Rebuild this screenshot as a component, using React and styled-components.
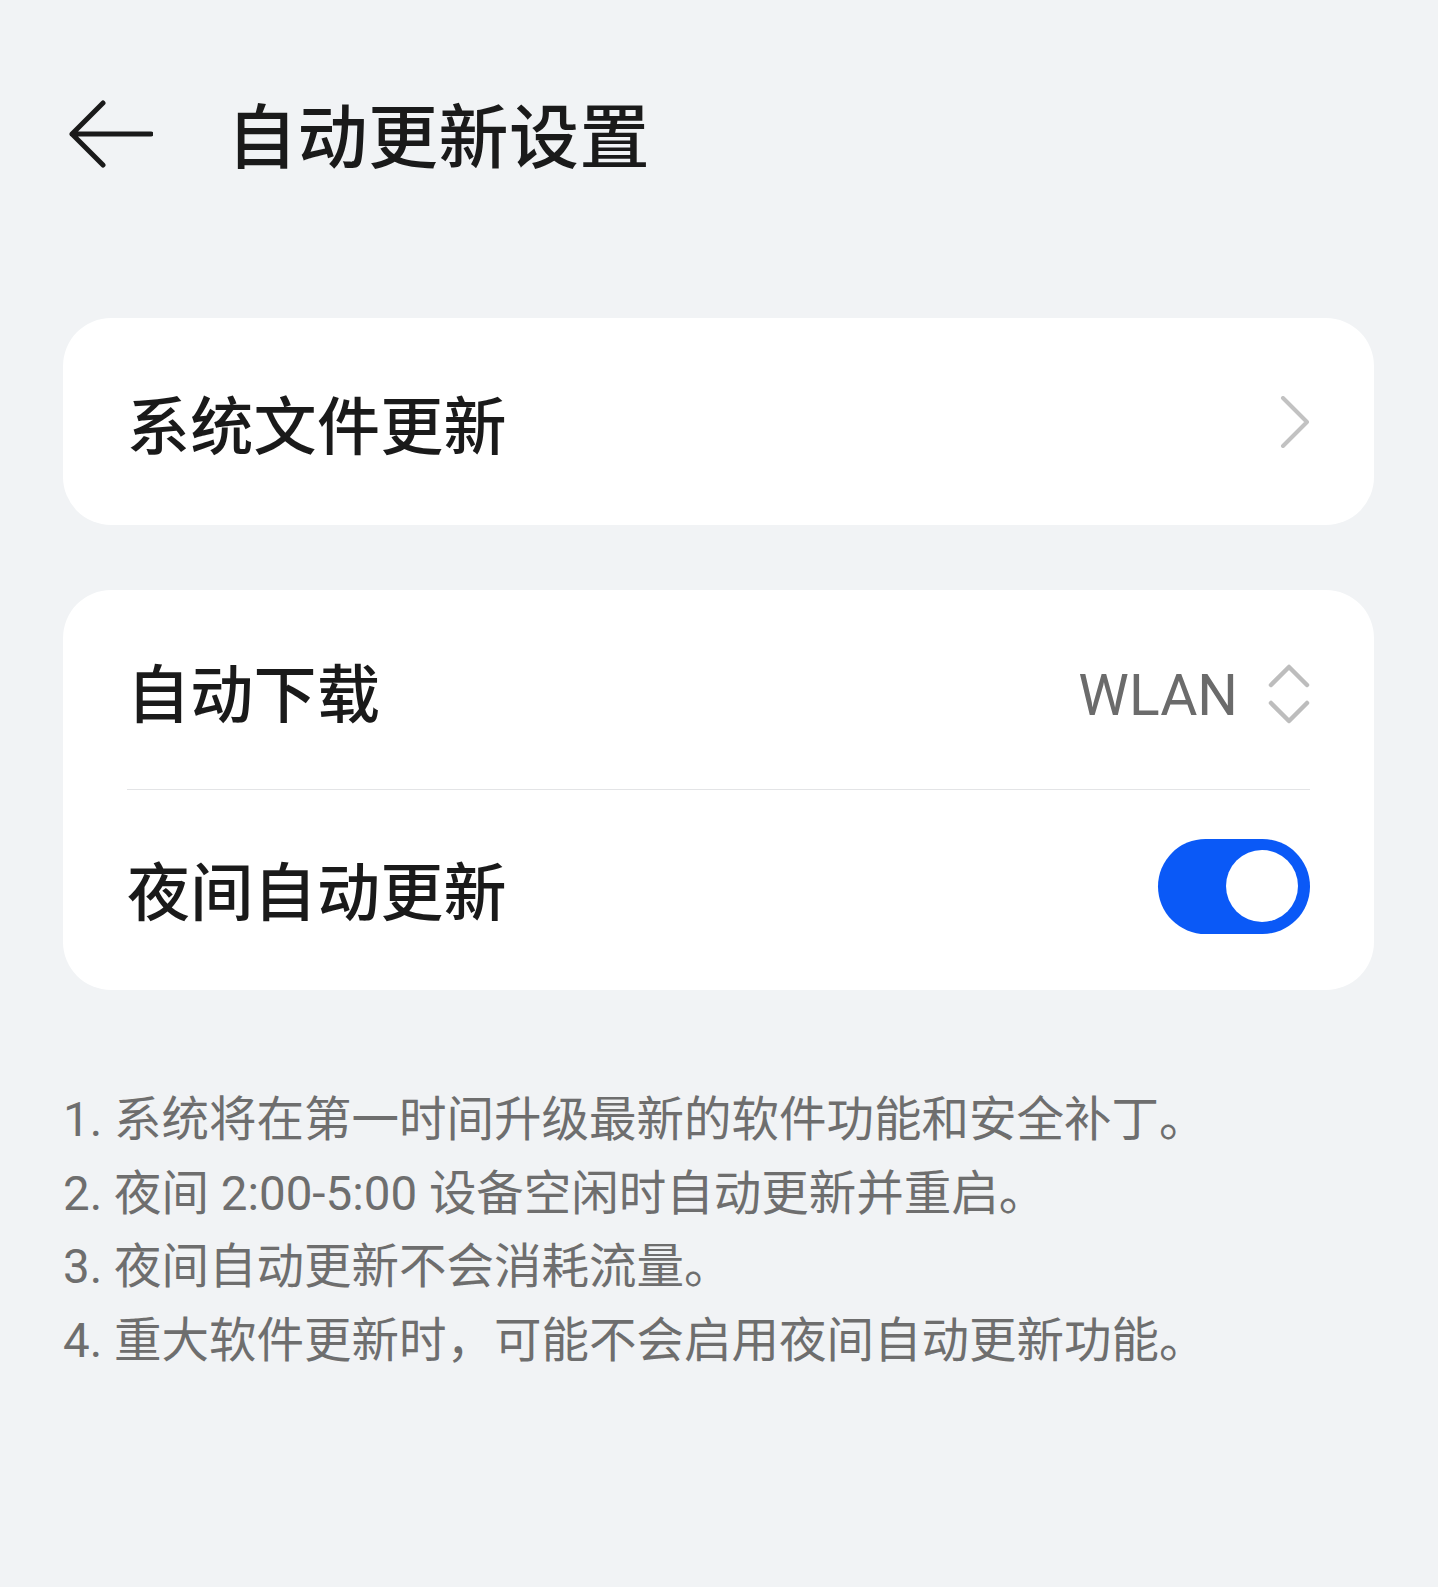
import React from 'react';
import styled, { createGlobalStyle } from 'styled-components';

const GlobalStyle = createGlobalStyle`
  body {
    margin: 0;
    background: #f1f3f5;
    font-family: "Noto Sans CJK SC", "Noto Sans", sans-serif;
  }
`;

const Page = styled.div`
  width: 1438px;
  min-height: 1587px;
  box-sizing: border-box;
  padding: 98px 64px 0 63px;
  background: #f1f3f5;
`;

const Header = styled.div`
  display: flex;
  align-items: center;
  height: 70px;
`;

const BackButton = styled.div`
  width: 84px;
  height: 68px;
  margin-left: 6px;
  margin-right: 74px;
  margin-top: 2px;
  display: flex;
  align-items: center;
`;

const Title = styled.h1`
  margin: 0;
  font-size: 70px;
  font-weight: 500;
  color: #1a1a1a;
  line-height: 1;
  letter-spacing: 0.5px;
`;

const Card = styled.div`
  background: #fff;
  border-radius: 48px;
  margin-top: ${(p) => p.$gap}px;
  padding: 0 64px;
`;

const Row = styled.div`
  display: flex;
  align-items: center;
  justify-content: space-between;
  height: ${(p) => p.$h}px;
  border-top: ${(p) => (p.$divider ? '1.5px solid #e3e4e6' : 'none')};
`;

const Label = styled.span`
  font-size: 63px;
  font-weight: 500;
  color: #1a1a1a;
  line-height: 1;
  letter-spacing: 0.3px;
  margin-bottom: ${(p) => p.$lift || 0}px;
`;

const Right = styled.div`
  display: flex;
  align-items: center;
  gap: 30px;
  margin-top: 8px;
`;

const Value = styled.span`
  font-family: Roboto, "Noto Sans", sans-serif;
  font-size: 57px;
  color: #6b6b6b;
  line-height: 1;
  padding-top: 4px;
`;

const Switch = styled.div`
  width: 152px;
  height: 95px;
  border-radius: 48px;
  background: #0a59f7;
  display: flex;
  align-items: center;
  justify-content: flex-end;
  padding-right: 12px;
  box-sizing: border-box;
  margin-bottom: 8px;
`;

const Knob = styled.div`
  width: 72px;
  height: 72px;
  border-radius: 50%;
  background: #fff;
`;

const Notes = styled.ol`
  list-style: none;
  margin: 94px 0 0;
  padding: 0;
`;

const Note = styled.li`
  font-family: Roboto, "Noto Sans CJK SC", sans-serif;
  font-size: 47.5px;
  line-height: 73.5px;
  color: #6e6e6e;
  white-space: nowrap;
`;

const BackArrow = () => (
  <svg width="84" height="68" viewBox="0 0 84 68" fill="none">
    <path d="M34 3 L3 34 L34 65 M3 34 H82" stroke="#1a1a1a" strokeWidth="5" strokeLinecap="round" strokeLinejoin="round" />
  </svg>
);

const Chevron = () => (
  <svg width="30" height="52" viewBox="0 0 30 52" fill="none">
    <path d="M3 2 L27 26 L3 50" stroke="#c2c2c2" strokeWidth="4" strokeLinecap="round" strokeLinejoin="round" />
  </svg>
);

const UpDown = () => (
  <svg width="42" height="62" viewBox="0 0 42 62" fill="none">
    <path d="M3 22 L21 4 L39 22 M3 40 L21 58 L39 40" stroke="#bdbdbd" strokeWidth="4.5" strokeLinecap="round" strokeLinejoin="round" />
  </svg>
);

const notes = [
  '1. 系统将在第一时间升级最新的软件功能和安全补丁。',
  '2. 夜间 2:00-5:00 设备空闲时自动更新并重启。',
  '3. 夜间自动更新不会消耗流量。',
  '4. 重大软件更新时，可能不会启用夜间自动更新功能。',
];

export default function App() {
  return (
    <>
      <GlobalStyle />
      <Page>
        <Header>
          <BackButton>
            <BackArrow />
          </BackButton>
          <Title>自动更新设置</Title>
        </Header>

        <Card $gap={150}>
          <Row $h={207}>
            <Label>系统文件更新</Label>
            <Chevron />
          </Row>
        </Card>

        <Card $gap={65}>
          <Row $h={199}>
            <Label>自动下载</Label>
            <Right>
              <Value>WLAN</Value>
              <UpDown />
            </Right>
          </Row>
          <Row $h={200} $divider>
            <Label $lift={6}>夜间自动更新</Label>
            <Switch>
              <Knob />
            </Switch>
          </Row>
        </Card>

        <Notes>
          {notes.map((n) => (
            <Note key={n}>{n}</Note>
          ))}
        </Notes>
      </Page>
    </>
  );
}
